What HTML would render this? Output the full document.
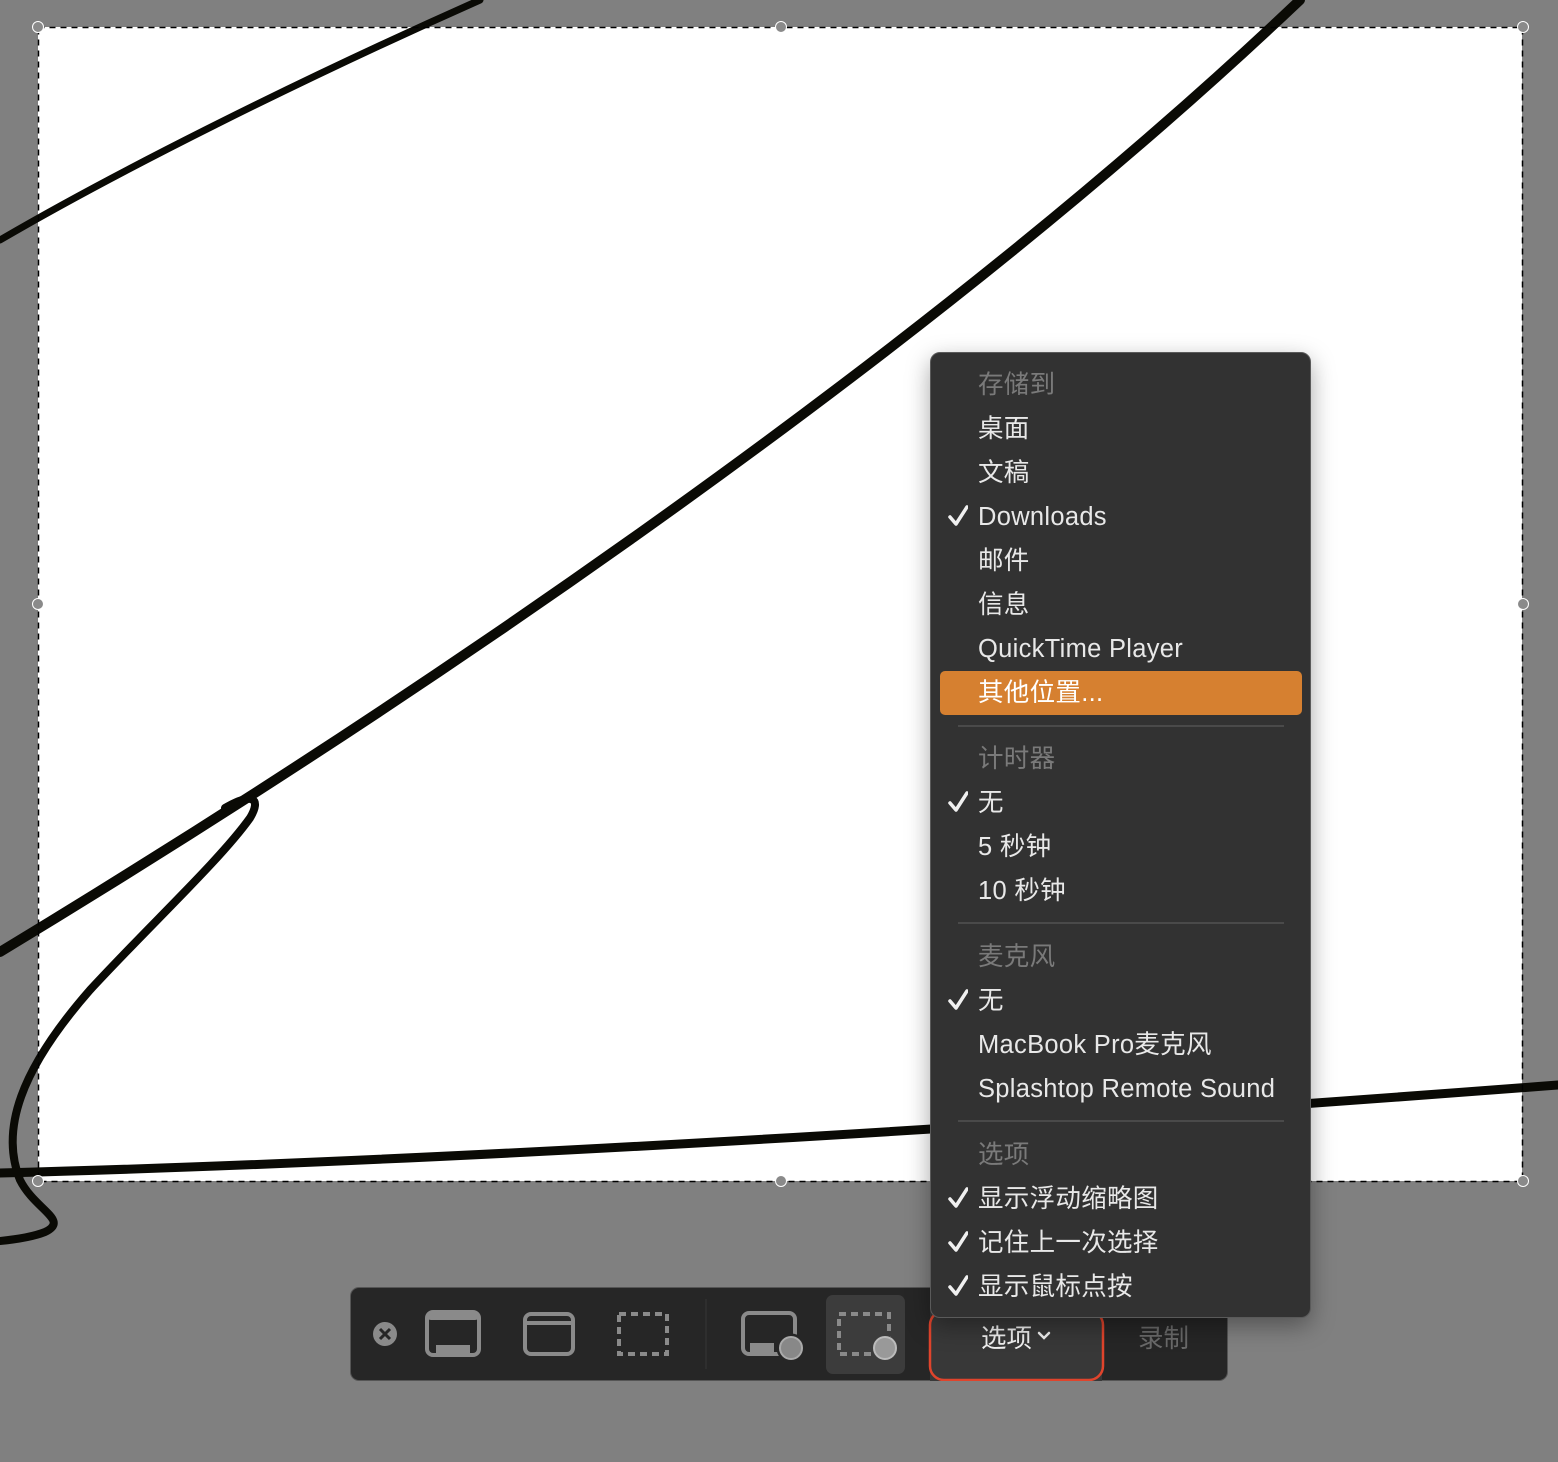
<!DOCTYPE html>
<html><head><meta charset="utf-8"><style>
body{margin:0;width:1558px;height:1462px;background:#808080;position:relative;overflow:hidden;font-family:"Liberation Sans","Noto Sans CJK SC",sans-serif}
.sel{position:absolute;left:38px;top:27px;width:1484px;height:1154px;background:#fff}
svg.c{position:absolute;left:0;top:0}
.menu{position:absolute;left:930px;top:352px;width:381px;height:966px;background:#323232;border:1px solid #5a5a5a;border-radius:10px;box-shadow:0 8px 24px rgba(0,0,0,.35);box-sizing:border-box}
.it{position:absolute;left:47px;font-size:25.5px;letter-spacing:0.3px;color:#e8e8e8;line-height:44px;height:44px;white-space:nowrap}
.h{color:#7a7a7a}
.ck{position:absolute;left:17px;width:20px;height:44px}
.sep{position:absolute;left:27px;width:326px;height:2px;background:#4a4a4a}
.hl{position:absolute;left:9px;top:318px;width:362px;height:44px;background:#d68030;border-radius:5px}
.tb{position:absolute;left:350px;top:1287px;width:878px;height:94px;background:#262626;border:1px solid #555;border-radius:9px;box-sizing:border-box}
.hd{position:absolute;width:12px;height:12px;border-radius:50%;background:#8a8a8a;border:1.5px solid #fff;box-sizing:border-box}
</style></head><body>
<div class="sel"></div>
<svg class="c" width="1558" height="1462" viewBox="0 0 1558 1462">
<g fill="none" stroke="#0a0a05" stroke-linecap="round">
<path d="M0,240 C120,170 300,80 480,0" stroke-width="7"/>
<path d="M0,952 C350,740 900,380 1300,0" stroke-width="10"/>
<path d="M225,808 C252,792 262,798 250,818 C220,860 150,925 90,990 C20,1070 0,1130 20,1180 C35,1210 70,1220 45,1232 C30,1238 10,1240 0,1241" stroke-width="8"/>
<path d="M0,1173 C500,1160 1100,1120 1558,1085" stroke-width="9"/>
</g>
<rect x="38.5" y="27.5" width="1484" height="1154" fill="none" stroke="#000" stroke-width="1.5" stroke-dasharray="6 5"/>
</svg>
<div class="hd" style="left:32px;top:21px"></div><div class="hd" style="left:775px;top:21px"></div><div class="hd" style="left:1517px;top:21px"></div>
<div class="hd" style="left:32px;top:598px"></div><div class="hd" style="left:1517px;top:598px"></div>
<div class="hd" style="left:32px;top:1175px"></div><div class="hd" style="left:775px;top:1175px"></div><div class="hd" style="left:1517px;top:1175px"></div>

<div class="tb">
<svg width="878" height="94" viewBox="0 0 878 94" style="position:absolute;left:-1px;top:-1px">
<circle cx="35" cy="47" r="12" fill="#8a8a8a"/><path d="M30,42 L40,52 M40,42 L30,52" stroke="#262626" stroke-width="3"/>
<rect x="77" y="25" width="52" height="43" rx="6" fill="none" stroke="#8a8a8a" stroke-width="4"/><rect x="86" y="58" width="34" height="8" fill="#8a8a8a"/><rect x="77" y="25" width="52" height="8" fill="#8a8a8a" rx="4"/>
<rect x="175" y="27" width="48" height="40" rx="6" fill="none" stroke="#8a8a8a" stroke-width="4"/><line x1="175" y1="36" x2="223" y2="36" stroke="#8a8a8a" stroke-width="4"/>
<circle cx="182" cy="31" r="1.5" fill="#262626"/><circle cx="187" cy="31" r="1.5" fill="#262626"/><circle cx="192" cy="31" r="1.5" fill="#262626"/>
<rect x="269" y="27" width="48" height="40" fill="none" stroke="#8a8a8a" stroke-width="4" stroke-dasharray="7 5"/>
<line x1="356" y1="12" x2="356" y2="82" stroke="#2e2e2e" stroke-width="2"/>
<rect x="393" y="26" width="52" height="41" rx="6" fill="none" stroke="#8a8a8a" stroke-width="4"/><rect x="400" y="56" width="24" height="10" fill="#8a8a8a"/>
<circle cx="441" cy="61" r="13" fill="#777" stroke="#262626" stroke-width="3"/><circle cx="441" cy="61" r="11" fill="#888" stroke="#aaa" stroke-width="2"/>
<rect x="476" y="8" width="79" height="79" rx="7" fill="#3c3c3c"/>
<rect x="489" y="27" width="50" height="40" fill="none" stroke="#8a8a8a" stroke-width="4" stroke-dasharray="7 5"/>
<circle cx="535" cy="61" r="13" fill="#3c3c3c"/><circle cx="535" cy="61" r="11" fill="#999" stroke="#bbb" stroke-width="2"/>
<rect x="580" y="24" width="172" height="70" fill="#383838"/>
<rect x="580" y="24" width="173" height="69" rx="14" fill="none" stroke="#e0442c" stroke-width="2.5"/>
<path d="M689,46 L694,51 L699,46" fill="none" stroke="#f0f0f0" stroke-width="2.5" stroke-linecap="round"/>
</svg>
<div style="position:absolute;left:630px;top:30px;font-size:25.5px;color:#f0f0f0">选项</div>
<div style="position:absolute;left:787px;top:30px;font-size:25.5px;color:#6a6a6a">录制</div>
</div>

<div class="menu">
<svg width="0" height="0" style="position:absolute"><defs><path id="k" d="M2,22 L8,29 L19,12" fill="none" stroke="#f0f0f0" stroke-width="3.5" stroke-linecap="round" stroke-linejoin="round"/></defs></svg>
<div class="hl"></div>
<div class="it h" style="top:10px">存储到</div>
<div class="it" style="top:54px">桌面</div>
<div class="it" style="top:98px">文稿</div>
<svg class="ck" style="top:142px"><use href="#k"/></svg><div class="it" style="top:142px">Downloads</div>
<div class="it" style="top:186px">邮件</div>
<div class="it" style="top:230px">信息</div>
<div class="it" style="top:274px">QuickTime Player</div>
<div class="it" style="top:318px;color:#fff">其他位置...</div>
<div class="sep" style="top:372px"></div>
<div class="it h" style="top:384px">计时器</div>
<svg class="ck" style="top:428px"><use href="#k"/></svg><div class="it" style="top:428px">无</div>
<div class="it" style="top:472px">5 秒钟</div>
<div class="it" style="top:516px">10 秒钟</div>
<div class="sep" style="top:569px"></div>
<div class="it h" style="top:582px">麦克风</div>
<svg class="ck" style="top:626px"><use href="#k"/></svg><div class="it" style="top:626px">无</div>
<div class="it" style="top:670px">MacBook Pro麦克风</div>
<div class="it" style="top:714px">Splashtop Remote Sound</div>
<div class="sep" style="top:767px"></div>
<div class="it h" style="top:780px">选项</div>
<svg class="ck" style="top:824px"><use href="#k"/></svg><div class="it" style="top:824px">显示浮动缩略图</div>
<svg class="ck" style="top:868px"><use href="#k"/></svg><div class="it" style="top:868px">记住上一次选择</div>
<svg class="ck" style="top:912px"><use href="#k"/></svg><div class="it" style="top:912px">显示鼠标点按</div>
</div>
</body></html>
